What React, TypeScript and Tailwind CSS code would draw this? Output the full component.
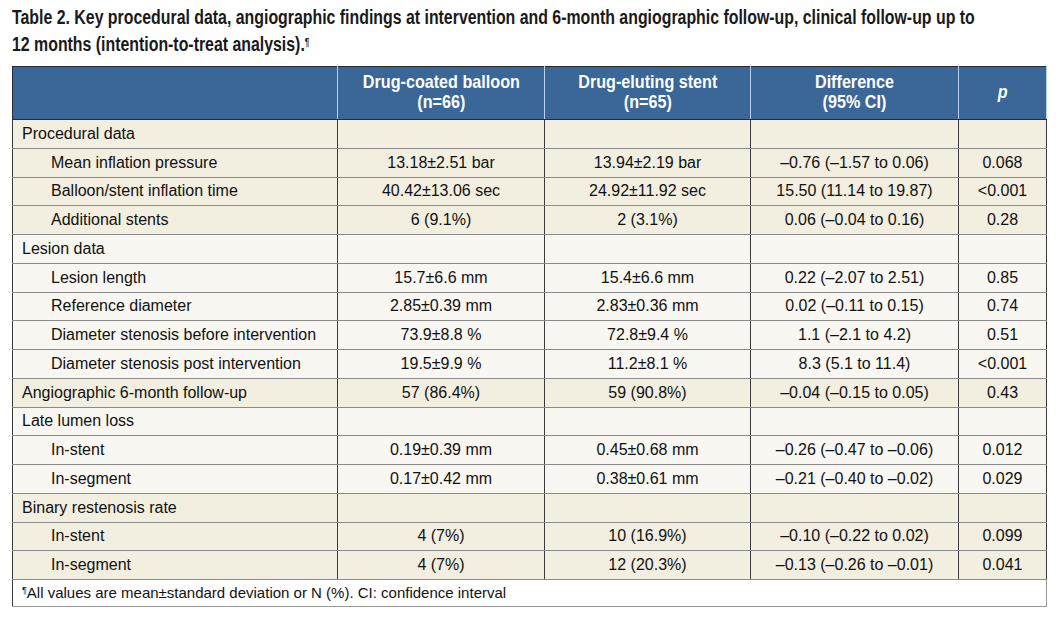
import React from "react";

type Row = { label: string; a?: string; b?: string; d?: string; p?: string; sub?: boolean };
type Group = { tone: "beige" | "light"; rows: Row[] };

const groups: Group[] = [
  {
    tone: "beige",
    rows: [
      { label: "Procedural data" },
      { label: "Mean inflation pressure", a: "13.18±2.51 bar", b: "13.94±2.19 bar", d: "–0.76 (–1.57 to 0.06)", p: "0.068", sub: true },
      { label: "Balloon/stent inflation time", a: "40.42±13.06 sec", b: "24.92±11.92 sec", d: "15.50 (11.14 to 19.87)", p: "<0.001", sub: true },
      { label: "Additional stents", a: "6 (9.1%)", b: "2 (3.1%)", d: "0.06 (–0.04 to 0.16)", p: "0.28", sub: true },
    ],
  },
  {
    tone: "light",
    rows: [
      { label: "Lesion data" },
      { label: "Lesion length", a: "15.7±6.6 mm", b: "15.4±6.6 mm", d: "0.22 (–2.07 to 2.51)", p: "0.85", sub: true },
      { label: "Reference diameter", a: "2.85±0.39 mm", b: "2.83±0.36 mm", d: "0.02 (–0.11 to 0.15)", p: "0.74", sub: true },
      { label: "Diameter stenosis before intervention", a: "73.9±8.8 %", b: "72.8±9.4 %", d: "1.1 (–2.1 to 4.2)", p: "0.51", sub: true },
      { label: "Diameter stenosis post intervention", a: "19.5±9.9 %", b: "11.2±8.1 %", d: "8.3 (5.1 to 11.4)", p: "<0.001", sub: true },
    ],
  },
  {
    tone: "beige",
    rows: [{ label: "Angiographic 6-month follow-up", a: "57 (86.4%)", b: "59 (90.8%)", d: "–0.04 (–0.15 to 0.05)", p: "0.43" }],
  },
  {
    tone: "light",
    rows: [
      { label: "Late lumen loss" },
      { label: "In-stent", a: "0.19±0.39 mm", b: "0.45±0.68 mm", d: "–0.26 (–0.47 to –0.06)", p: "0.012", sub: true },
      { label: "In-segment", a: "0.17±0.42 mm", b: "0.38±0.61 mm", d: "–0.21 (–0.40 to –0.02)", p: "0.029", sub: true },
    ],
  },
  {
    tone: "beige",
    rows: [
      { label: "Binary restenosis rate" },
      { label: "In-stent", a: "4 (7%)", b: "10 (16.9%)", d: "–0.10 (–0.22 to 0.02)", p: "0.099", sub: true },
      { label: "In-segment", a: "4 (7%)", b: "12 (20.3%)", d: "–0.13 (–0.26 to –0.01)", p: "0.041", sub: true },
    ],
  },
];

// condensed look: Liberation Sans Bold squeezed horizontally
const cond = "font-['Liberation_Sans',Arial,sans-serif] font-bold";
const cell = "border-x border-b border-x-[#3a3a3a] border-b-[#8a8a8a] h-[28.75px] p-0 text-center align-middle";

function Head({ top, bottom, italic }: { top: string; bottom?: string; italic?: boolean }) {
  return (
    <th className="border-y border-[#2a2a2a] border-r border-r-[#b8d0ec] p-0 pb-[3px] font-bold">
      <span className={`inline-block scale-x-[0.85] whitespace-nowrap ${italic ? "italic" : ""}`}>
        {top}
        {bottom && <br />}
        {bottom}
      </span>
    </th>
  );
}

export default function App() {
  return (
    <div className="min-h-[620px] w-[1061px] overflow-hidden bg-white pl-[12px] pt-[4px] text-[#111] font-['Liberation_Sans',Arial,sans-serif]">
      <h1 className={`${cond} text-[19.5px] leading-[27px] text-[#1a1a1a]`}>
        <span className="block origin-left scale-x-[0.814] whitespace-nowrap">
          Table 2. Key procedural data, angiographic findings at intervention and 6-month angiographic follow-up, clinical follow-up up to
        </span>
        <span className="block origin-left scale-x-[0.814] whitespace-nowrap">
          12 months (intention-to-treat analysis).<sup className="text-[10px]">¶</sup>
        </span>
      </h1>
      <table className="mt-[8px] w-[1034px] table-fixed border-collapse border-r border-r-[#9a9a9a] text-[16px]">
        <colgroup>
          <col className="w-[325px]" />
          <col className="w-[207px]" />
          <col className="w-[206px]" />
          <col className="w-[208px]" />
          <col className="w-[88px]" />
        </colgroup>
        <thead>
          <tr className={`${cond} h-[53px] bg-[#3b6698] text-[19px] leading-[20px] text-white`}>
            <th className="border-y border-l border-[#2a2a2a] border-r border-r-[#b8d0ec]" />
            <Head top="Drug-coated balloon" bottom="(n=66)" />
            <Head top="Drug-eluting stent" bottom="(n=65)" />
            <Head top="Difference" bottom="(95% CI)" />
            <Head top="p" italic />
          </tr>
        </thead>
        <tbody>
          {groups.map((g, gi) =>
            g.rows.map((r, ri) => (
              <tr key={`${gi}-${ri}`} className={g.tone === "beige" ? "bg-[#f2eee0]" : "bg-[#f9f7f1]"}>
                <td className={`${cell} text-left ${r.sub ? "pl-[38px]" : "pl-[9px]"}`}>{r.label}</td>
                <td className={cell}>{r.a}</td>
                <td className={cell}>{r.b}</td>
                <td className={cell}>{r.d}</td>
                <td className={cell}>{r.p}</td>
              </tr>
            ))
          )}
          <tr className="bg-white">
            <td colSpan={5} className="h-[27px] border-l border-b border-l-[#3a3a3a] border-b-[#9a9a9a] pl-[9px] text-left text-[15px]">
              <sup className="text-[9px]">¶</sup>All values are mean±standard deviation or N (%). CI: confidence interval
            </td>
          </tr>
        </tbody>
      </table>
    </div>
  );
}
